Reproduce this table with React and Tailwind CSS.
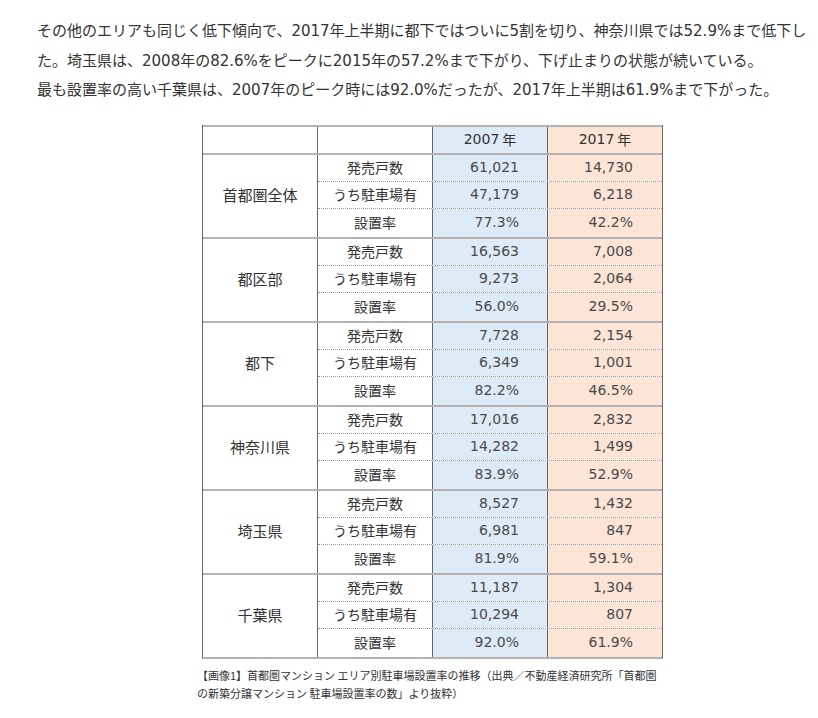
import React from 'react';

const groups = [
  { name: '首都圏全体', rows: [['61,021', '14,730'], ['47,179', '6,218'], ['77.3%', '42.2%']] },
  { name: '都区部', rows: [['16,563', '7,008'], ['9,273', '2,064'], ['56.0%', '29.5%']] },
  { name: '都下', rows: [['7,728', '2,154'], ['6,349', '1,001'], ['82.2%', '46.5%']] },
  { name: '神奈川県', rows: [['17,016', '2,832'], ['14,282', '1,499'], ['83.9%', '52.9%']] },
  { name: '埼玉県', rows: [['8,527', '1,432'], ['6,981', '847'], ['81.9%', '59.1%']] },
  { name: '千葉県', rows: [['11,187', '1,304'], ['10,294', '807'], ['92.0%', '61.9%']] },
];

const labels = ['発売戸数', 'うち駐車場有', '設置率'];

const jp = { fontFamily: '"Noto Sans CJK JP", "Noto Sans", sans-serif' };
const num = { fontFamily: '"DejaVu Sans", "Noto Sans CJK JP", sans-serif' };

const Group = ({ g }) => (
  <div className="flex border-t-2 border-[#b3b3b3]">
    <div className="w-[114px] flex items-center justify-center text-[15px] text-[#333]">
      {g.name}
    </div>
    <div className="flex-1 border-l border-[#666]">
      {g.rows.map((r, i) => (
        <div
          key={i}
          className={`flex ${i < 2 ? 'h-[27px] border-b border-dotted border-[#999]' : 'h-[28px]'}`}
        >
          <div className="w-[114px] flex items-center justify-center text-[14px] text-[#333]">
            {labels[i]}
          </div>
          <div
            className="w-[115px] border-l border-[#666] bg-[#ddebf7] flex items-center justify-end pr-[28px] text-[14px] text-[#4a4a4a]"
            style={num}
          >
            {r[0]}
          </div>
          <div
            className="flex-1 border-l border-[#666] bg-[#fce4d6] flex items-center justify-end pr-[29px] text-[14px] text-[#4a4a4a]"
            style={num}
          >
            {r[1]}
          </div>
        </div>
      ))}
    </div>
  </div>
);

export default function App() {
  return (
    <div className="w-[818px] h-[718px] bg-white text-[#333]" style={jp}>
      <div className="pl-[37px] pt-[17px] text-[15px] leading-[29.5px] whitespace-nowrap" style={num}>
        <div>その他のエリアも同じく低下傾向で、2017年上半期に都下ではついに5割を切り、神奈川県では52.9%まで低下し</div>
        <div>た。埼玉県は、2008年の82.6%をピークに2015年の57.2%まで下がり、下げ止まりの状態が続いている。</div>
        <div>最も設置率の高い千葉県は、2007年のピーク時には92.0%だったが、2017年上半期は61.9%まで下がった。</div>
      </div>

      <div className="ml-[202px] mt-[19px] w-[461px] border-x border-[#666] border-b-2 border-b-[#b3b3b3]">
        <div className="flex h-[28px] border-t-2 border-[#b3b3b3]">
          <div className="w-[114px]" />
          <div className="w-[115px] border-l border-[#666]" />
          <div
            className="w-[115px] border-l border-[#666] bg-[#ddebf7] flex items-center justify-center text-[14px] text-[#333]"
            style={num}
          >
            2007 <span className="ml-[3px]" style={jp}>年</span>
          </div>
          <div
            className="flex-1 border-l border-[#666] bg-[#fce4d6] flex items-center justify-center text-[14px] text-[#333]"
            style={num}
          >
            2017 <span className="ml-[3px]" style={jp}>年</span>
          </div>
        </div>
        {groups.map((g) => (
          <Group key={g.name} g={g} />
        ))}
      </div>

      <div className="ml-[197px] mt-[7px] text-[11px] leading-[18px] whitespace-nowrap text-[#333]">
        <div>【画像1】首都圏マンション エリア別駐車場設置率の推移（出典／不動産経済研究所「首都圏</div>
        <div>の新築分譲マンション 駐車場設置率の数」より抜粋）</div>
      </div>
    </div>
  );
}
